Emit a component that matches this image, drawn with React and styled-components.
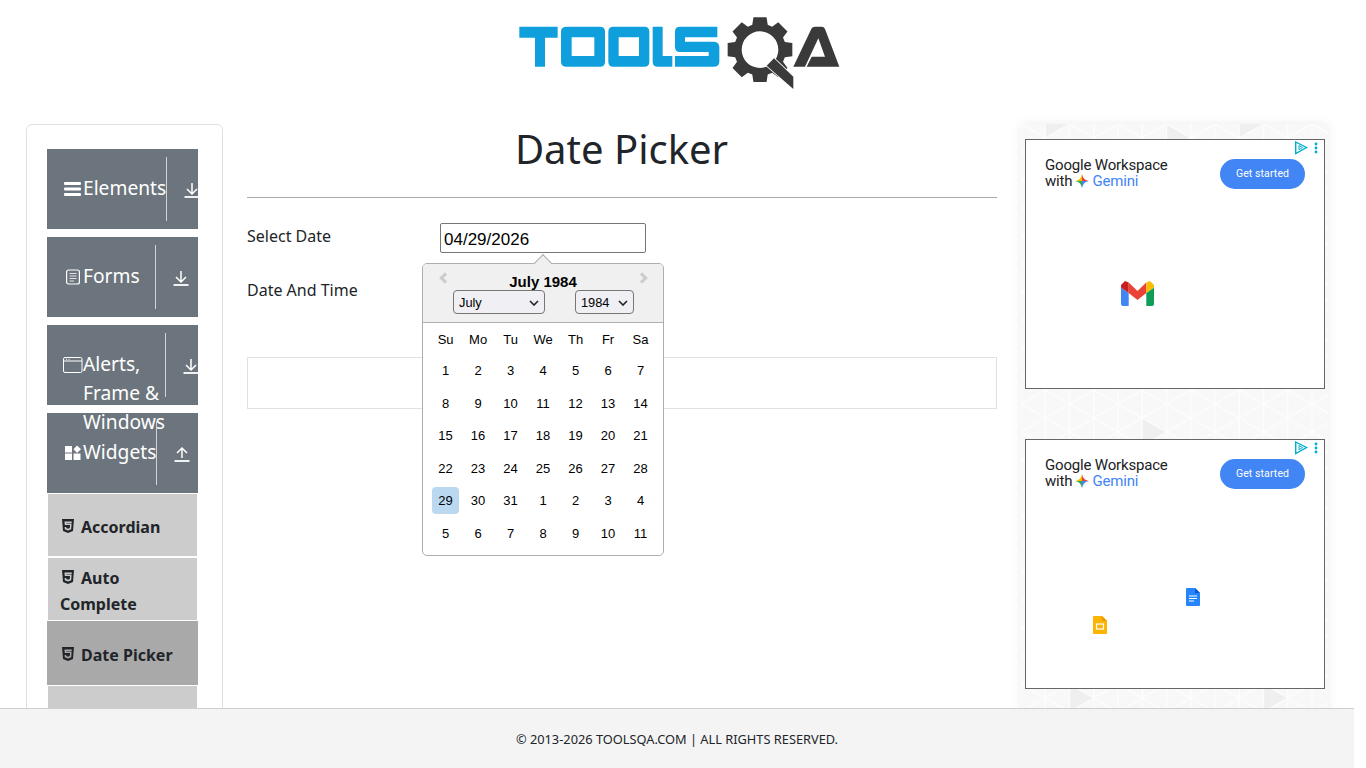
import React from "react";
import styled, { createGlobalStyle } from "styled-components";

const Global = createGlobalStyle`
  html, body { margin: 0; padding: 0; height: 100%; overflow: hidden; background: #fff; }
  body { font-family: "Noto Sans", "Open Sans", sans-serif; color: #212529; font-size: 16px; }
  * { box-sizing: border-box; }
`;

// triangle lattice behind the ads, one tile of 4 x 6 cells
const buildPattern = () => {
  const w = 48.5;
  const h = 28;
  const tileW = w * 4;
  const tileH = h * 6;
  const tri = (x, y) => `M${x} ${y}V${y + h}L${x + w / 2} ${y + h / 2}Z`;
  const dark = [tri(48.5, 56), tri(24.25, -14), tri(24.25, 154), tri(121.25, 126), tri(145.5, 0)];
  let lines = "";
  for (let i = 0; i <= 8; i++) lines += `M${i * 24.25} 0V${tileH}`;
  for (let k = -8; k <= 14; k++) {
    lines += `M0 ${k * h}L${tileW} ${k * h + 4 * h}`;
    lines += `M0 ${k * h}L${tileW} ${k * h - 4 * h}`;
  }
  const svg = `<svg xmlns='http://www.w3.org/2000/svg' width='${tileW}' height='${tileH}'><rect width='${tileW}' height='${tileH}' fill='#f8f8f8'/><path d='${dark.join("")}' fill='#efefef'/><path d='${lines}' stroke='#fff' stroke-opacity='.75' stroke-width='1.3' fill='none'/></svg>`;
  return encodeURIComponent(svg);
};

const Page = styled.div`
  width: 1354px;
  height: 768px;
  overflow: hidden;
`;
const Header = styled.header`
  height: 124px;
  padding: 5px 0 0 510px;
`;
const Body = styled.div`
  display: flex;
  align-items: flex-start;
`;
const Panel = styled.aside`
  width: 197px;
  margin-left: 26px;
  height: 700px;
  flex: none;
  border: 1px solid #dee2e6;
  border-radius: 6px;
  padding: 24px 24px 0 20px;
`;
const Group = styled.div`
  width: 151px;
  height: 80px;
  margin-bottom: ${(p) => (p.$last ? 0 : 8)}px;
  background: #6c757d;
  color: #fff;
  display: flex;
  position: relative;
`;
const GroupTitle = styled.div`
  width: ${(p) => p.$w}px;
  height: 64px;
  margin-top: 8px;
  flex: none;
  display: flex;
  align-items: flex-start;
  padding: 16px 0 0 16px;
  font-size: 19.2px;
  line-height: 29px;
  border-right: 1px solid #ced4da;
  position: relative;
  z-index: 1;
`;
const GroupText = styled.span`
  flex: 1;
  min-width: 0;
`;
const GroupIcon = styled.span`
  flex: none;
  width: 20px;
  display: flex;
  justify-content: center;
  padding-top: 8px;
`;
const Toggle = styled.span`
  flex: 1;
  overflow: hidden;
  padding: 32px 0 0 17px;
  display: block;
`;
const Item = styled.div`
  width: 151px;
  height: 64px;
  border: 1px solid ${(p) => (p.$on ? "#a9a9a9" : "#fff")};
  background: ${(p) => (p.$on ? "#a9a9a9" : "#ccc")};
  font-weight: 700;
  font-size: 16px;
  line-height: 26px;
  color: #212529;
  padding: ${(p) => (p.$two ? "7px 12px 0" : "20px 12px 0")};
`;
const ItemIcon = styled.svg`
  width: 16px;
  height: 16px;
  margin-right: 5px;
  vertical-align: -1px;
`;
const Main = styled.main`
  width: 750px;
  margin-left: 24px;
  flex: none;
  position: relative;
`;
const Title = styled.h1`
  margin: 0;
  height: 74px;
  padding-right: 1px;
  border-bottom: 1px solid #aaa;
  text-align: center;
  font-weight: 400;
  font-size: 40px;
  line-height: 50px;
  color: #212529;
`;
const Row = styled.div`
  display: flex;
  height: ${(p) => p.$h}px;
  margin-top: ${(p) => p.$top || 0}px;
`;
const Label = styled.label`
  width: 193px;
  flex: none;
  font-size: 16px;
  line-height: 26px;
`;
const DateInput = styled.input`
  width: 206px;
  height: 30px;
  border: 1px solid #767676;
  border-radius: 2px;
  padding: 3px 3px 0;
  font-family: "Liberation Sans", Arial, sans-serif;
  font-size: 17px;
  color: #000;
  background: #fff;
  outline: none;
`;
const ResultBox = styled.div`
  height: 52px;
  border: 1px solid #dee2e6;
`;
const Popper = styled.div`
  position: absolute;
  left: 175px;
  top: 139px;
  width: 242px;
  height: 293px;
  background: #fff;
  border: 1px solid #aeaeae;
  border-radius: 5px;
  font-family: "Liberation Sans", Arial, sans-serif;
  color: #000;
  &::before {
    content: "";
    position: absolute;
    left: 113px;
    top: -7px;
    width: 13px;
    height: 13px;
    background: #f0f0f0;
    border-left: 1px solid #aeaeae;
    border-top: 1px solid #aeaeae;
    transform: rotate(45deg);
  }
`;
const CalHead = styled.div`
  position: relative;
  height: 59px;
  background: #f0f0f0;
  border-bottom: 1px solid #aeaeae;
  border-radius: 4px 4px 0 0;
  text-align: center;
  padding-top: 9px;
`;
const Month = styled.div`
  font-size: 15px;
  font-weight: 700;
  line-height: 17px;
`;
const Chevron = styled.span`
  position: absolute;
  top: 10px;
  ${(p) => (p.$right ? "right: 17px;" : "left: 18px;")}
  width: 8px;
  height: 8px;
  border-top: 3px solid #ccc;
  ${(p) => (p.$right ? "border-right: 3px solid #ccc;" : "border-left: 3px solid #ccc;")}
  transform: rotate(${(p) => (p.$right ? 45 : -45)}deg);
`;
const Selects = styled.div`
  display: flex;
  justify-content: space-between;
  padding: 0 29px 0 30px;
  margin-top: 0;
`;
const Select = styled.div`
  width: ${(p) => p.$w}px;
  height: 24px;
  border: 1px solid #767676;
  border-radius: 4px;
  background: #efeff4;
  font-size: 12.8px;
  line-height: 22px;
  padding: 1px 5px 0 5px;
  display: flex;
  justify-content: space-between;
  align-items: center;
`;
const Week = styled.div`
  display: grid;
  grid-template-columns: repeat(7, 27.2px);
  column-gap: 5.3px;
  padding: ${(p) => (p.$head ? "7px 0 0 9px" : "0 0 0 9px")};
  height: ${(p) => (p.$head ? "32px" : "32.5px")};
  font-size: 13px;
  text-align: center;
`;
const Day = styled.div`
  height: 27px;
  line-height: 27px;
  border-radius: 4px;
  margin-top: 2px;
  background: ${(p) => (p.$sel ? "#bad9f1" : "transparent")};
`;
const DayName = styled.div`
  line-height: 20px;
`;
const Side = styled.aside`
  width: 307px;
  margin-left: 24px;
  flex: none;
  height: 600px;
  padding: 15px 3px 0 4px;
  box-shadow: 0 0 10px rgba(0, 0, 0, 0.08);
  background-color: #f8f8f8;
  background-image: url("data:image/svg+xml,${buildPattern()}");
`;
const Ad = styled.div`
  position: relative;
  height: 250px;
  margin-bottom: 50px;
  background: #fff;
  border: 1px solid #666;
`;
const AdHead = styled.div`
  display: flex;
  justify-content: space-between;
  padding: 18px 19px 0 19px;
`;
const AdTitle = styled.div`
  font-family: Roboto, "Noto Sans", sans-serif;
  font-size: 15px;
  line-height: 16px;
  margin-top: -1px;
  color: #202124;
  letter-spacing: -0.18px;
`;
const Gemini = styled.span`
  color: #4285f4;
`;
const AdButton = styled.div`
  width: 85px;
  height: 30px;
  margin-top: 1px;
  border-radius: 15px;
  background: #4285f4;
  color: #fff;
  font-family: Roboto, sans-serif;
  font-size: 10.5px;
  letter-spacing: 0.1px;
  line-height: 30px;
  text-align: center;
`;
const AdChoices = styled.svg`
  position: absolute;
  right: 5px;
  top: 1px;
`;
const Floating = styled.svg`
  position: absolute;
  left: ${(p) => p.$x}px;
  top: ${(p) => p.$y}px;
`;
const Footer = styled.footer`
  position: fixed;
  left: 0;
  bottom: 0;
  width: 1354px;
  height: 60px;
  background: #f4f4f4;
  border-top: 1px solid #ccc;
  text-align: center;
  font-size: 12.8px;
  line-height: 60px;
`;

// gear outline with 8 teeth around the centre of the logo's Q
const gearPath = () => {
  const cx = 750;
  const cy = 134;
  const pts = [];
  for (let i = 0; i < 8; i++) {
    const a = (i * Math.PI) / 4 - Math.PI / 2;
    const at = (r, d) => `${(cx + r * Math.cos(a + d)).toFixed(1)} ${(cy + r * Math.sin(a + d)).toFixed(1)}`;
    pts.push(at(78, -0.3), at(99, -0.2), at(99, 0.2), at(78, 0.3));
  }
  return `M${pts.join("L")}Z M${cx - 55} ${cy}a55 55 0 1 0 110 0a55 55 0 1 0 -110 0Z`;
};

const Logo = () => (
  <svg width="340" height="95" viewBox="0 0 1020 285">
    <g fill="#0f9fdc">
      <path d="M28 65H143V98H105V185H75V98H28Z" />
      <path fillRule="evenodd" d="M170 65H270Q285 65 285 80V170Q285 185 270 185H170Q153 185 153 170V80Q153 65 170 65ZM185 97V153H253V97Z" />
      <path fillRule="evenodd" d="M310 65H403Q418 65 418 80V170Q418 185 403 185H310Q295 185 295 170V80Q295 65 310 65ZM326 97V153H387V97Z" />
      <path d="M428 65H458V153H487V185H443Q428 185 428 170Z" />
      <path d="M510 65H622V97H525V110H610Q628 110 628 127V170Q628 185 610 185H495V153H596V141H510Q495 141 495 126V80Q495 65 510 65Z" />
    </g>
    <g fill="#3a3a3a">
      <path fillRule="evenodd" d={gearPath()} />
      <path d="M792 160L850 215V252L770 182Z" stroke="#fff" strokeWidth="5" paintOrder="stroke" />
      <path d="M850 185L905 70Q908 65 915 65H935Q942 65 945 72L988 185H890L905 155H945L925 100L885 185Z" />
    </g>
  </svg>
);

const Html5 = () => (
  <ItemIcon viewBox="0 0 16 16">
    <path fill="#212529" fillRule="evenodd" d="M2 1H14L13 13L8 15L3 13ZM4.5 3.5L4.8 7H10L9.8 10L8 10.7L6.3 10L6.2 9H4.6L4.9 11.2L8 12.4L11.2 11.2L11.6 5.5H6.4L6.3 5H11.7L11.8 3.5Z" />
  </ItemIcon>
);

const Bars = () => (
  <svg width="18" height="16" viewBox="0 0 18 16" fill="#fff">
    <rect y="1" width="17" height="3" rx="1" />
    <rect y="6.5" width="17" height="3" rx="1" />
    <rect y="12" width="17" height="3" rx="1" />
  </svg>
);
const Doc = () => (
  <svg width="14" height="16" viewBox="0 0 14 16" fill="none" stroke="#fff">
    <rect x="0.6" y="1" width="12.8" height="14" rx="2" strokeWidth="1.2" />
    <path d="M3.5 4.5H10.5M3.5 7H10.5M3.5 9.5H10.5M3.5 12H8" strokeWidth="1" strokeOpacity="0.8" />
  </svg>
);
const Browser = () => (
  <svg width="20" height="16" viewBox="0 0 20 16" fill="none" stroke="#fff">
    <rect x="0.5" y="0.5" width="18.5" height="15" rx="1.5" />
    <path d="M1 4H19" />
    <path d="M3 2.3H4M5.5 2.3H6.5" />
  </svg>
);
const Tiles = () => (
  <svg width="16" height="16" viewBox="0 0 16 16" fill="#fff">
    <rect x="0" y="1" width="7" height="6.5" />
    <rect x="0" y="8.5" width="7" height="6.5" />
    <rect x="8.5" y="8.5" width="7" height="6.5" />
    <path d="M12 0.5L16 4.2L12 8L8.5 4.2Z" />
  </svg>
);
const Down = () => (
  <svg width="16" height="16" viewBox="0 0 16 16" fill="none" stroke="#fff" strokeWidth="1.5">
    <path d="M8 1V12M3 7L8 12L13 7" />
    <path d="M0.5 15H15.5" strokeWidth="1.8" />
  </svg>
);
const Up = () => (
  <svg width="16" height="16" viewBox="0 0 16 16" fill="none" stroke="#fff" strokeWidth="1.5">
    <path d="M8 12V2M3 7L8 2L13 7" />
    <path d="M0.5 15H15.5" strokeWidth="1.8" />
  </svg>
);
const Caret = () => (
  <svg width="10" height="6" viewBox="0 0 10 6" fill="none" stroke="#222" strokeWidth="1.6">
    <path d="M1 1L5 5L9 1" />
  </svg>
);
const Spark = () => (
  <svg width="14" height="14" viewBox="0 0 14 14" style={{ verticalAlign: -2, margin: "0 3px" }}>
    <path d="M7 0Q6 6 0 7H7Z" fill="#fbbc04" />
    <path d="M7 0Q8 6 14 7H7Z" fill="#ea4335" />
    <path d="M14 7Q8 8 7 14V7Z" fill="#4285f4" />
    <path d="M0 7Q6 8 7 14V7Z" fill="#34a853" />
  </svg>
);
const Choices = () => (
  <AdChoices width="28" height="14" viewBox="0 0 28 14" fill="none">
    <path d="M4.7 1L15.5 6.5L4.7 12.5Z" stroke="#00aecd" strokeWidth="1.4" />
    <path d="M8 4.5L11.5 6.6L8 8.7Z" stroke="#00aecd" />
    <g fill="#00aecd">
      <circle cx="25" cy="3" r="1.4" />
      <circle cx="25" cy="7" r="1.4" />
      <circle cx="25" cy="11" r="1.4" />
    </g>
  </AdChoices>
);
const Gmail = () => (
  <Floating $x={95} $y={141} width="33" height="25" viewBox="0 0 33 25">
    <path d="M0 6.5L7.7 12V25H2Q0 25 0 23Z" fill="#4285f4" />
    <path d="M33 6.5L25.3 12V25H31Q33 25 33 23Z" fill="#0f9d58" />
    <path d="M0 6.5V4L4 0L7.7 1.5V12Z" fill="#c5221f" />
    <path d="M7.7 1.5L16.5 10L25.3 1.5V12L16.5 19L7.7 12Z" fill="#ea4335" />
    <path d="M25.3 1.5L29 0L33 4V6.5L25.3 12Z" fill="#fbbc04" />
  </Floating>
);
const Docs = () => (
  <Floating $x={160} $y={148} width="14" height="18" viewBox="0 0 14 18">
    <path d="M1 0H9L14 5V17Q14 18 13 18H1Q0 18 0 17V1Q0 0 1 0Z" fill="#2684fc" />
    <path d="M9 0L14 5H9Z" fill="#0b57d0" />
    <path d="M3 8H11M3 10.5H11M3 13H8" stroke="#fff" strokeWidth="1" />
  </Floating>
);
const Slides = () => (
  <Floating $x={67} $y={176} width="14" height="18" viewBox="0 0 14 18">
    <path d="M1 0H9L14 5V17Q14 18 13 18H1Q0 18 0 17V1Q0 0 1 0Z" fill="#fbb400" />
    <path d="M9 0L14 5H9Z" fill="#f29900" />
    <rect x="3.5" y="8" width="7" height="5" fill="none" stroke="#fff" strokeWidth="1.2" />
  </Floating>
);

const dayNames = ["Su", "Mo", "Tu", "We", "Th", "Fr", "Sa"];
const weeks = [
  [1, 2, 3, 4, 5, 6, 7],
  [8, 9, 10, 11, 12, 13, 14],
  [15, 16, 17, 18, 19, 20, 21],
  [22, 23, 24, 25, 26, 27, 28],
  [29, 30, 31, 1, 2, 3, 4],
  [5, 6, 7, 8, 9, 10, 11],
];

const NavGroup = ({ w, icon, label, up, last }) => (
  <Group $last={last}>
    <GroupTitle $w={w}>
      <GroupIcon>{icon}</GroupIcon>
      <GroupText>{label}</GroupText>
    </GroupTitle>
    <Toggle>{up ? <Up /> : <Down />}</Toggle>
  </Group>
);

const AdCard = ({ children }) => (
  <Ad>
    <Choices />
    <AdHead>
      <AdTitle>
        Google Workspace
        <br />
        with
        <Spark />
        <Gemini>Gemini</Gemini>
      </AdTitle>
      <AdButton>Get started</AdButton>
    </AdHead>
    {children}
  </Ad>
);

export default function App() {
  return (
    <Page>
      <Global />
      <Header>
        <Logo />
      </Header>
      <Body>
        <Panel>
          <NavGroup w={120} icon={<Bars />} label="Elements" />
          <NavGroup w={109} icon={<Doc />} label="Forms" />
          <NavGroup w={119} icon={<Browser />} label="Alerts, Frame & Windows" />
          <NavGroup w={110} icon={<Tiles />} label="Widgets" up last />
          <Item><Html5 />Accordian</Item>
          <Item $two><Html5 />Auto Complete</Item>
          <Item $on><Html5 />Date Picker</Item>
          <Item />
        </Panel>
        <Main>
          <Title>Date Picker</Title>
          <Row $h={54} $top={25}>
            <Label>Select Date</Label>
            <DateInput readOnly value="04/29/2026" />
          </Row>
          <Row $h={80}>
            <Label>Date And Time</Label>
          </Row>
          <ResultBox />
          <Popper>
            <CalHead>
              <Chevron />
              <Chevron $right />
              <Month>July 1984</Month>
              <Selects>
                <Select $w={92}>July <Caret /></Select>
                <Select $w={59}>1984 <Caret /></Select>
              </Selects>
            </CalHead>
            <Week $head>
              {dayNames.map((d) => (
                <DayName key={d}>{d}</DayName>
              ))}
            </Week>
            {weeks.map((week, i) => (
              <Week key={i}>
                {week.map((d) => (
                  <Day key={d} $sel={i === 4 && d === 29}>{d}</Day>
                ))}
              </Week>
            ))}
          </Popper>
        </Main>
        <Side>
          <AdCard><Gmail /></AdCard>
          <AdCard><Docs /><Slides /></AdCard>
        </Side>
      </Body>
      <Footer>© 2013-2026 TOOLSQA.COM | ALL RIGHTS RESERVED.</Footer>
    </Page>
  );
}
